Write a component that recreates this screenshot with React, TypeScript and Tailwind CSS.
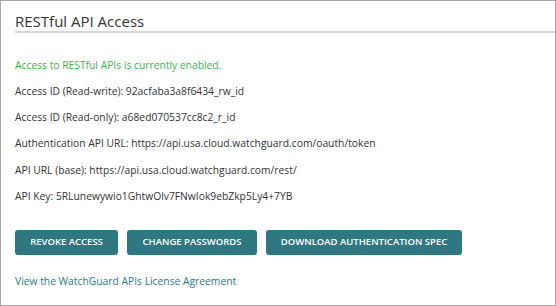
export default function App() {
  const rows = [
    "Access ID (Read-write): 92acfaba3a8f6434_rw_id",
    "Access ID (Read-only): a68ed070537cc8c2_r_id",
    "Authentication API URL: https://api.usa.cloud.watchguard.com/oauth/token",
    "API URL (base): https://api.usa.cloud.watchguard.com/rest/",
    "API Key: 5RLunewywio1GhtwOlv7FNwIok9ebZkp5Ly4+7YB",
  ];

  return (
    <div className="h-[306px] w-[556px] border border-[#a6a6a6] bg-white font-['Open_Sans',sans-serif] text-[#333]">
      <div className="pl-[14px] pt-[10px]">
        {/* Header */}
        <h1 className="border-b-2 border-[#d6d6d6] pb-[0px] text-[15px] leading-[20px]">
          RESTful API Access
        </h1>

        <p className="mt-[25px] text-[10.3px] leading-[15px] text-[#3bb54a]">
          Access to RESTful APIs is currently enabled.
        </p>

        <div className="mt-[11px] flex flex-col gap-[11.2px]">
          {rows.map((r) => (
            <p key={r} className="text-[10.3px] leading-[15px]">
              {r}
            </p>
          ))}
        </div>

        {/* Buttons */}
        <div className="mt-[26px] flex gap-[9px]">
          <button className="h-[25px] w-[103px] rounded-[3px] bg-[#2f7781] text-[9.5px] font-semibold text-white">
            REVOKE ACCESS
          </button>
          <button className="h-[25px] w-[130px] rounded-[3px] bg-[#2f7781] text-[9.5px] font-semibold text-white">
            CHANGE PASSWORDS
          </button>
          <button className="h-[25px] w-[196px] rounded-[3px] bg-[#2f7781] text-[9.5px] font-semibold text-white">
            DOWNLOAD AUTHENTICATION SPEC
          </button>
        </div>

        <a href="#" className="mt-[19px] block text-[10.3px] leading-[15px] text-[#2b7a8a]">
          View the WatchGuard APIs License Agreement
        </a>
      </div>
    </div>
  );
}
